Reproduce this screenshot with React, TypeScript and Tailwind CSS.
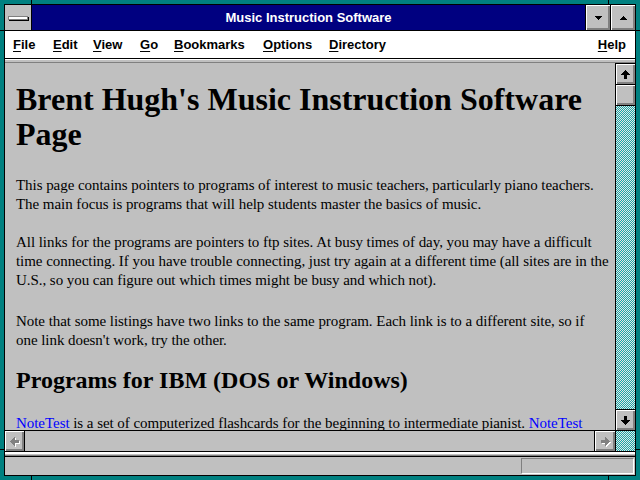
const MENUS = [
  { label: 'File', w: 'w-[40px]' },
  { label: 'Edit', w: 'w-[40px]' },
  { label: 'View', w: 'w-[47px]' },
  { label: 'Go', w: 'w-[34px]' },
  { label: 'Bookmarks', w: 'w-[89px]' },
  { label: 'Options', w: 'w-[66px]' },
  { label: 'Directory', w: 'w-[90px]' },
];

const bevel = 'shadow-[inset_1px_1px_#ffffff,inset_-1px_-1px_#808080,inset_-2px_-2px_#808080]';

function Mnemonic({ text }: { text: string }) {
  return (
    <span>
      <u className="underline-offset-2">{text[0]}</u>
      {text.slice(1)}
    </span>
  );
}

function Arrow({ dir, gray }: { dir: 'up' | 'down' | 'left' | 'right'; gray?: boolean }) {
  const pts = {
    up: '5.5,1 10,6 7,6 7,10 4,10 4,6 1,6',
    down: '5.5,10 10,5 7,5 7,1 4,1 4,5 1,5',
    left: '1,5.5 6,1 6,4 10,4 10,7 6,7 6,10',
    right: '10,5.5 5,1 5,4 1,4 1,7 5,7 5,10',
  }[dir];
  return (
    <svg width="11" height="11" viewBox="0 0 11 11" shapeRendering="crispEdges">
      {gray && <polygon points={pts} fill="#ffffff" transform="translate(1,1)" />}
      <polygon points={pts} fill={gray ? '#808080' : '#000000'} />
    </svg>
  );
}

// dithered scrollbar track, drawn pixel by pixel
function Dither() {
  return (
    <svg className="absolute inset-0 w-full h-full" shapeRendering="crispEdges">
      <defs>
        <pattern id="dith" width="2" height="2" patternUnits="userSpaceOnUse">
          <rect width="2" height="2" fill="#e6e6e6" />
          <rect width="1" height="1" fill="#18a8a8" />
          <rect x="1" y="1" width="1" height="1" fill="#18a8a8" />
        </pattern>
      </defs>
      <rect width="100%" height="100%" fill="url(#dith)" />
    </svg>
  );
}

function Notch({ className }: { className: string }) {
  return <div className={`absolute bg-black ${className}`} />;
}

export default function App() {
  return (
    <div className="relative w-[640px] h-[480px] bg-[#008080] p-[4px] font-['Liberation_Sans',Arial,sans-serif]">
      <Notch className="left-[31px] top-0 w-px h-[4px]" />
      <Notch className="left-[608px] top-0 w-px h-[4px]" />
      <Notch className="left-0 top-[30px] w-[4px] h-px" />
      <Notch className="right-0 top-[30px] w-[4px] h-px" />
      <Notch className="left-[31px] bottom-0 w-px h-[4px]" />
      <Notch className="left-[608px] bottom-0 w-px h-[4px]" />
      <Notch className="left-0 bottom-[30px] w-[4px] h-px" />
      <Notch className="right-0 bottom-[30px] w-[4px] h-px" />

      <div className="flex flex-col h-full border border-black bg-[#c0c0c0]">
        {/* title bar */}
        <div className="flex h-[26px] border-b border-black">
          <div className="w-[27px] border-r border-black bg-[#c0c0c0] flex items-center justify-center">
            <div className="w-[20px] h-[4px] bg-white border border-[#808080] shadow-[1px_1px_#000000]" />
          </div>
          <div className="flex-1 bg-[#000080] text-white font-bold text-[13px] flex items-center justify-center">
            Music Instruction Software
          </div>
          <div className={`w-[25px] border-l border-black ${bevel} flex items-center justify-center`}>
            <svg width="7" height="4" viewBox="0 0 7 4" shapeRendering="crispEdges"><polygon points="0,0 7,0 3.5,4" fill="#000" /></svg>
          </div>
          <div className={`w-[25px] border-l border-black ${bevel} flex items-center justify-center`}>
            <svg width="7" height="4" viewBox="0 0 7 4" shapeRendering="crispEdges"><polygon points="3.5,0 7,4 0,4" fill="#000" /></svg>
          </div>
        </div>

        {/* menu bar */}
        <div className="flex items-center h-[27px] bg-white text-black font-bold text-[13px]">
          {MENUS.map((m) => (
            <div key={m.label} className={`${m.w} pl-[8px]`}>
              <Mnemonic text={m.label} />
            </div>
          ))}
          <div className="ml-auto pr-[9px]">
            <Mnemonic text="Help" />
          </div>
        </div>

        {/* separator */}
        <div className="h-[5px] border-t border-black bg-[#c0c0c0] shadow-[inset_0_1px_#ffffff,inset_0_-1px_#808080]" />

        {/* main */}
        <div className="flex flex-1 min-h-0">
          <div className="flex flex-col flex-1 min-w-0">
            <div className="flex-1 min-h-0 overflow-hidden pl-[11px] pr-[8px] pt-[19px] font-['Liberation_Serif','Times_New_Roman',serif] text-black">
              <h1 className="text-[32px] font-bold leading-[35px] mb-[24px]">
                Brent Hugh's Music Instruction Software<br />Page
              </h1>
              <p className="text-[15px] leading-[19px] mb-[19px] whitespace-nowrap tracking-[-0.05px]">
                This page contains pointers to programs of interest to music teachers, particularly piano teachers.<br />
                The main focus is programs that will help students master the basics of music.
              </p>
              <p className="text-[15px] leading-[19px] mb-[22px] whitespace-nowrap tracking-[-0.05px]">
                All links for the programs are pointers to ftp sites. At busy times of day, you may have a difficult<br />
                time connecting. If you have trouble connecting, just try again at a different time (all sites are in the<br />
                U.S., so you can figure out which times might be busy and which not).
              </p>
              <p className="text-[15px] leading-[19px] mb-[16px] whitespace-nowrap tracking-[-0.05px]">
                Note that some listings have two links to the same program. Each link is to a different site, so if<br />
                one link doesn't work, try the other.
              </p>
              <h2 className="text-[24px] font-bold leading-[28px] mb-[20px]">Programs for IBM (DOS or Windows)</h2>
              <p className="text-[15px] leading-[19px] whitespace-nowrap tracking-[-0.05px]">
                <span className="text-[#0000ff]">NoteTest</span> is a set of computerized flashcards for the beginning to intermediate pianist.{' '}
                <span className="text-[#0000ff]">NoteTest</span>
              </p>
            </div>
            {/* horizontal scrollbar */}
            <div className="flex h-[21px] border-t border-black bg-[#c0c0c0]">
              <div className={`w-[20px] border-r border-black ${bevel} flex items-center justify-center`}>
                <Arrow dir="left" gray />
              </div>
              <div className="flex-1" />
              <div className={`w-[21px] border-l border-black ${bevel} flex items-center justify-center`}>
                <Arrow dir="right" gray />
              </div>
            </div>
          </div>

          {/* vertical scrollbar */}
          <div className="relative w-[20px] border-l border-black flex flex-col">
            <Dither />
            <div className={`relative h-[22px] border-y border-black bg-[#c0c0c0] ${bevel} flex items-center justify-center`}>
              <Arrow dir="up" />
            </div>
            <div className={`relative h-[21px] border-b border-black bg-[#c0c0c0] ${bevel}`} />
            <div className="flex-1" />
            <div className={`relative h-[22px] border-y border-black bg-[#c0c0c0] ${bevel} flex items-center justify-center`}>
              <Arrow dir="down" />
            </div>
            <div className="h-[20px]" />
          </div>
        </div>

        {/* status separator */}
        <div className="h-[6px] border-y border-black bg-[#c0c0c0] shadow-[inset_0_1px_#ffffff,inset_0_2px_#ffffff,inset_0_-1px_#808080]" />

        {/* status bar */}
        <div className="flex h-[18px] items-center justify-end pr-px">
          <div className="w-[113px] h-[16px] border border-t-[#808080] border-l-[#808080] border-b-white border-r-white" />
        </div>
      </div>
    </div>
  );
}
